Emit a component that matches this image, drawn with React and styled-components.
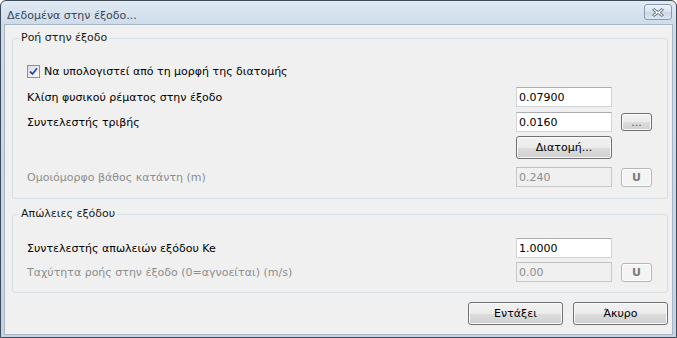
import React from "react";
import styled, { createGlobalStyle } from "styled-components";

const Global = createGlobalStyle`
  html, body { margin: 0; padding: 0; background: #ffffff; }
  body { font-family: "DejaVu Sans", Tahoma, sans-serif; font-size: 11px; }
  * { box-sizing: border-box; }
`;

const Window = styled.div`
  width: 677px;
  height: 338px;
  display: flex;
  flex-direction: column;
  border: 1px solid #3f4a57;
  border-radius: 6px 6px 0 0;
  background: linear-gradient(#e1eaf5, #cddbeb 24px, #c4d4e6);
  padding: 0 3px 2px 3px;
`;

const TitleBar = styled.div`
  height: 23px;
  flex: none;
  display: flex;
  align-items: flex-end;
  justify-content: space-between;
  padding: 0 1px 2px 3px;
`;

const Title = styled.span`
  font-size: 11px;
  line-height: 13px;
  color: #3a4550;
`;

const CloseButton = styled.div`
  align-self: flex-start;
  width: 28px;
  height: 16px;
  margin-top: 3px;
  border: 1px solid #8a9bb0;
  border-radius: 3px;
  background: linear-gradient(#eef3f9, #d8e2ee 50%, #cbd8e7 51%, #dbe5f1);
  display: flex;
  align-items: center;
  justify-content: center;
`;

const Client = styled.div`
  flex: 1;
  background: #f0f0f0;
  border: 1px solid #a9b6c4;
  padding: 6px 4px 0 7px;
  display: flex;
  flex-direction: column;
`;

const Group = styled.fieldset`
  margin: ${(p) => p.$mt}px 0 0 0;
  border: 1px solid #d5dfe5;
  border-radius: 3px;
  padding: ${(p) => p.$pt}px 15px ${(p) => p.$pb}px 14px;
  min-width: 0;
  display: flex;
  flex-direction: column;
`;

const Legend = styled.legend`
  margin-left: -8px;
  padding: 0 2px;
  line-height: 14px;
  font-size: 11px;
  color: #1a1a1a;
`;

const Row = styled.div`
  display: grid;
  grid-template-columns: 1fr 96px 31px;
  column-gap: 9px;
  align-items: center;
  height: ${(p) => p.$h}px;
  margin-top: ${(p) => p.$mt || 0}px;
`;

const Label = styled.span`
  color: ${(p) => (p.$disabled ? "#8d8d8d" : "#000000")};
  white-space: nowrap;
`;

const CheckLabel = styled.label`
  display: flex;
  align-items: center;
  gap: 4px;
  color: #000;
  white-space: nowrap;
  grid-column: 1 / -1;
`;

const CheckBox = styled.span`
  width: 13px;
  height: 13px;
  border: 1px solid #8e8f8f;
  background: linear-gradient(135deg, #dcdcdc, #fbfbfb);
  display: flex;
  align-items: center;
  justify-content: center;
  padding: 1px;
`;

const Input = styled.div`
  height: 20px;
  display: flex;
  align-items: center;
  padding-left: 2px;
  border: 1px solid ${(p) => (p.$disabled ? "#c8c8c8" : "#d0d3d8")};
  border-top-color: ${(p) => (p.$disabled ? "#c0c0c0" : "#abadb3")};
  background: ${(p) => (p.$disabled ? "#f0f0f0" : "#ffffff")};
  color: ${(p) => (p.$disabled ? "#8d8d8d" : "#000")};
  grid-column: 2;
`;

const Button = styled.button`
  font-family: inherit;
  font-size: 11px;
  height: ${(p) => p.$h || 23}px;
  width: ${(p) => (p.$w ? p.$w + "px" : "auto")};
  padding: 0;
  border: 1px solid ${(p) => (p.$disabled ? "#b5b8bb" : "#707070")};
  border-radius: 3px;
  color: ${(p) => (p.$disabled ? "#7c7c7c" : p.$muted ? "#555" : "#000")};
  font-weight: ${(p) => (p.$bold ? "bold" : "normal")};
  background: ${(p) =>
    p.$disabled
      ? "#f4f4f4"
      : "linear-gradient(#f2f2f2, #ebebeb 50%, #dddddd 51%, #cfcfcf)"};
  box-shadow: inset 0 0 0 1px ${(p) => (p.$disabled ? "#fcfcfc" : "#fbfbfb")};
  display: flex;
  align-items: center;
  justify-content: center;
  grid-column: ${(p) => p.$col || "auto"};
`;

const Footer = styled.div`
  display: flex;
  justify-content: flex-end;
  gap: 10px;
  margin: 9px 0 0 0;
`;

export default function App() {
  return (
    <>
      <Global />
      <Window>
        <TitleBar>
          <Title>Δεδομένα στην έξοδο...</Title>
          <CloseButton>
            <svg width="14" height="11" viewBox="0 0 14 11">
              <path
                d="M3 1.5 L7 4.5 L11 1.5 L12.5 3 L9 5.5 L12.5 8 L11 9.5 L7 6.5 L3 9.5 L1.5 8 L5 5.5 L1.5 3 Z"
                fill="#ffffff"
                stroke="#5b6674"
                strokeWidth="1"
                strokeLinejoin="round"
              />
            </svg>
          </CloseButton>
        </TitleBar>
        <Client>
          <Group $mt={0} $pt={19} $pb={11}>
            <Legend>Ροή στην έξοδο</Legend>
            <Row $h={14}>
              <CheckLabel>
                <CheckBox>
                  <svg width="9" height="9" viewBox="0 0 9 9">
                    <path
                      d="M1 4.5 L3.5 7 L8 1.2"
                      fill="none"
                      stroke="#2f4fa8"
                      strokeWidth="1.8"
                    />
                  </svg>
                </CheckBox>
                Να υπολογιστεί από τη μορφή της διατομής
              </CheckLabel>
            </Row>
            <Row $h={20} $mt={9}>
              <Label>Κλίση φυσικού ρέματος στην έξοδο</Label>
              <Input>0.07900</Input>
            </Row>
            <Row $h={20} $mt={5}>
              <Label>Συντελεστής τριβής</Label>
              <Input>0.0160</Input>
              <Button $h={18} $muted>...</Button>
            </Row>
            <Row $h={23} $mt={4}>
              <Button $col="2">Διατομή...</Button>
            </Row>
            <Row $h={20} $mt={8}>
              <Label $disabled>Ομοιόμορφο βάθος κατάντη (m)</Label>
              <Input $disabled>0.240</Input>
              <Button $h={19} $disabled $bold>
                U
              </Button>
            </Row>
          </Group>
          <Group $mt={8} $pt={17} $pb={10}>
            <Legend>Απώλειες εξόδου</Legend>
            <Row $h={20}>
              <Label>Συντελεστής απωλειών εξόδου Ke</Label>
              <Input>1.0000</Input>
            </Row>
            <Row $h={20} $mt={4}>
              <Label $disabled>Ταχύτητα ροής στην έξοδο (0=αγνοείται) (m/s)</Label>
              <Input $disabled>0.00</Input>
              <Button $h={19} $disabled $bold>
                U
              </Button>
            </Row>
          </Group>
          <Footer>
            <Button $w={95}>Εντάξει</Button>
            <Button $w={95}>Άκυρο</Button>
          </Footer>
        </Client>
      </Window>
    </>
  );
}
